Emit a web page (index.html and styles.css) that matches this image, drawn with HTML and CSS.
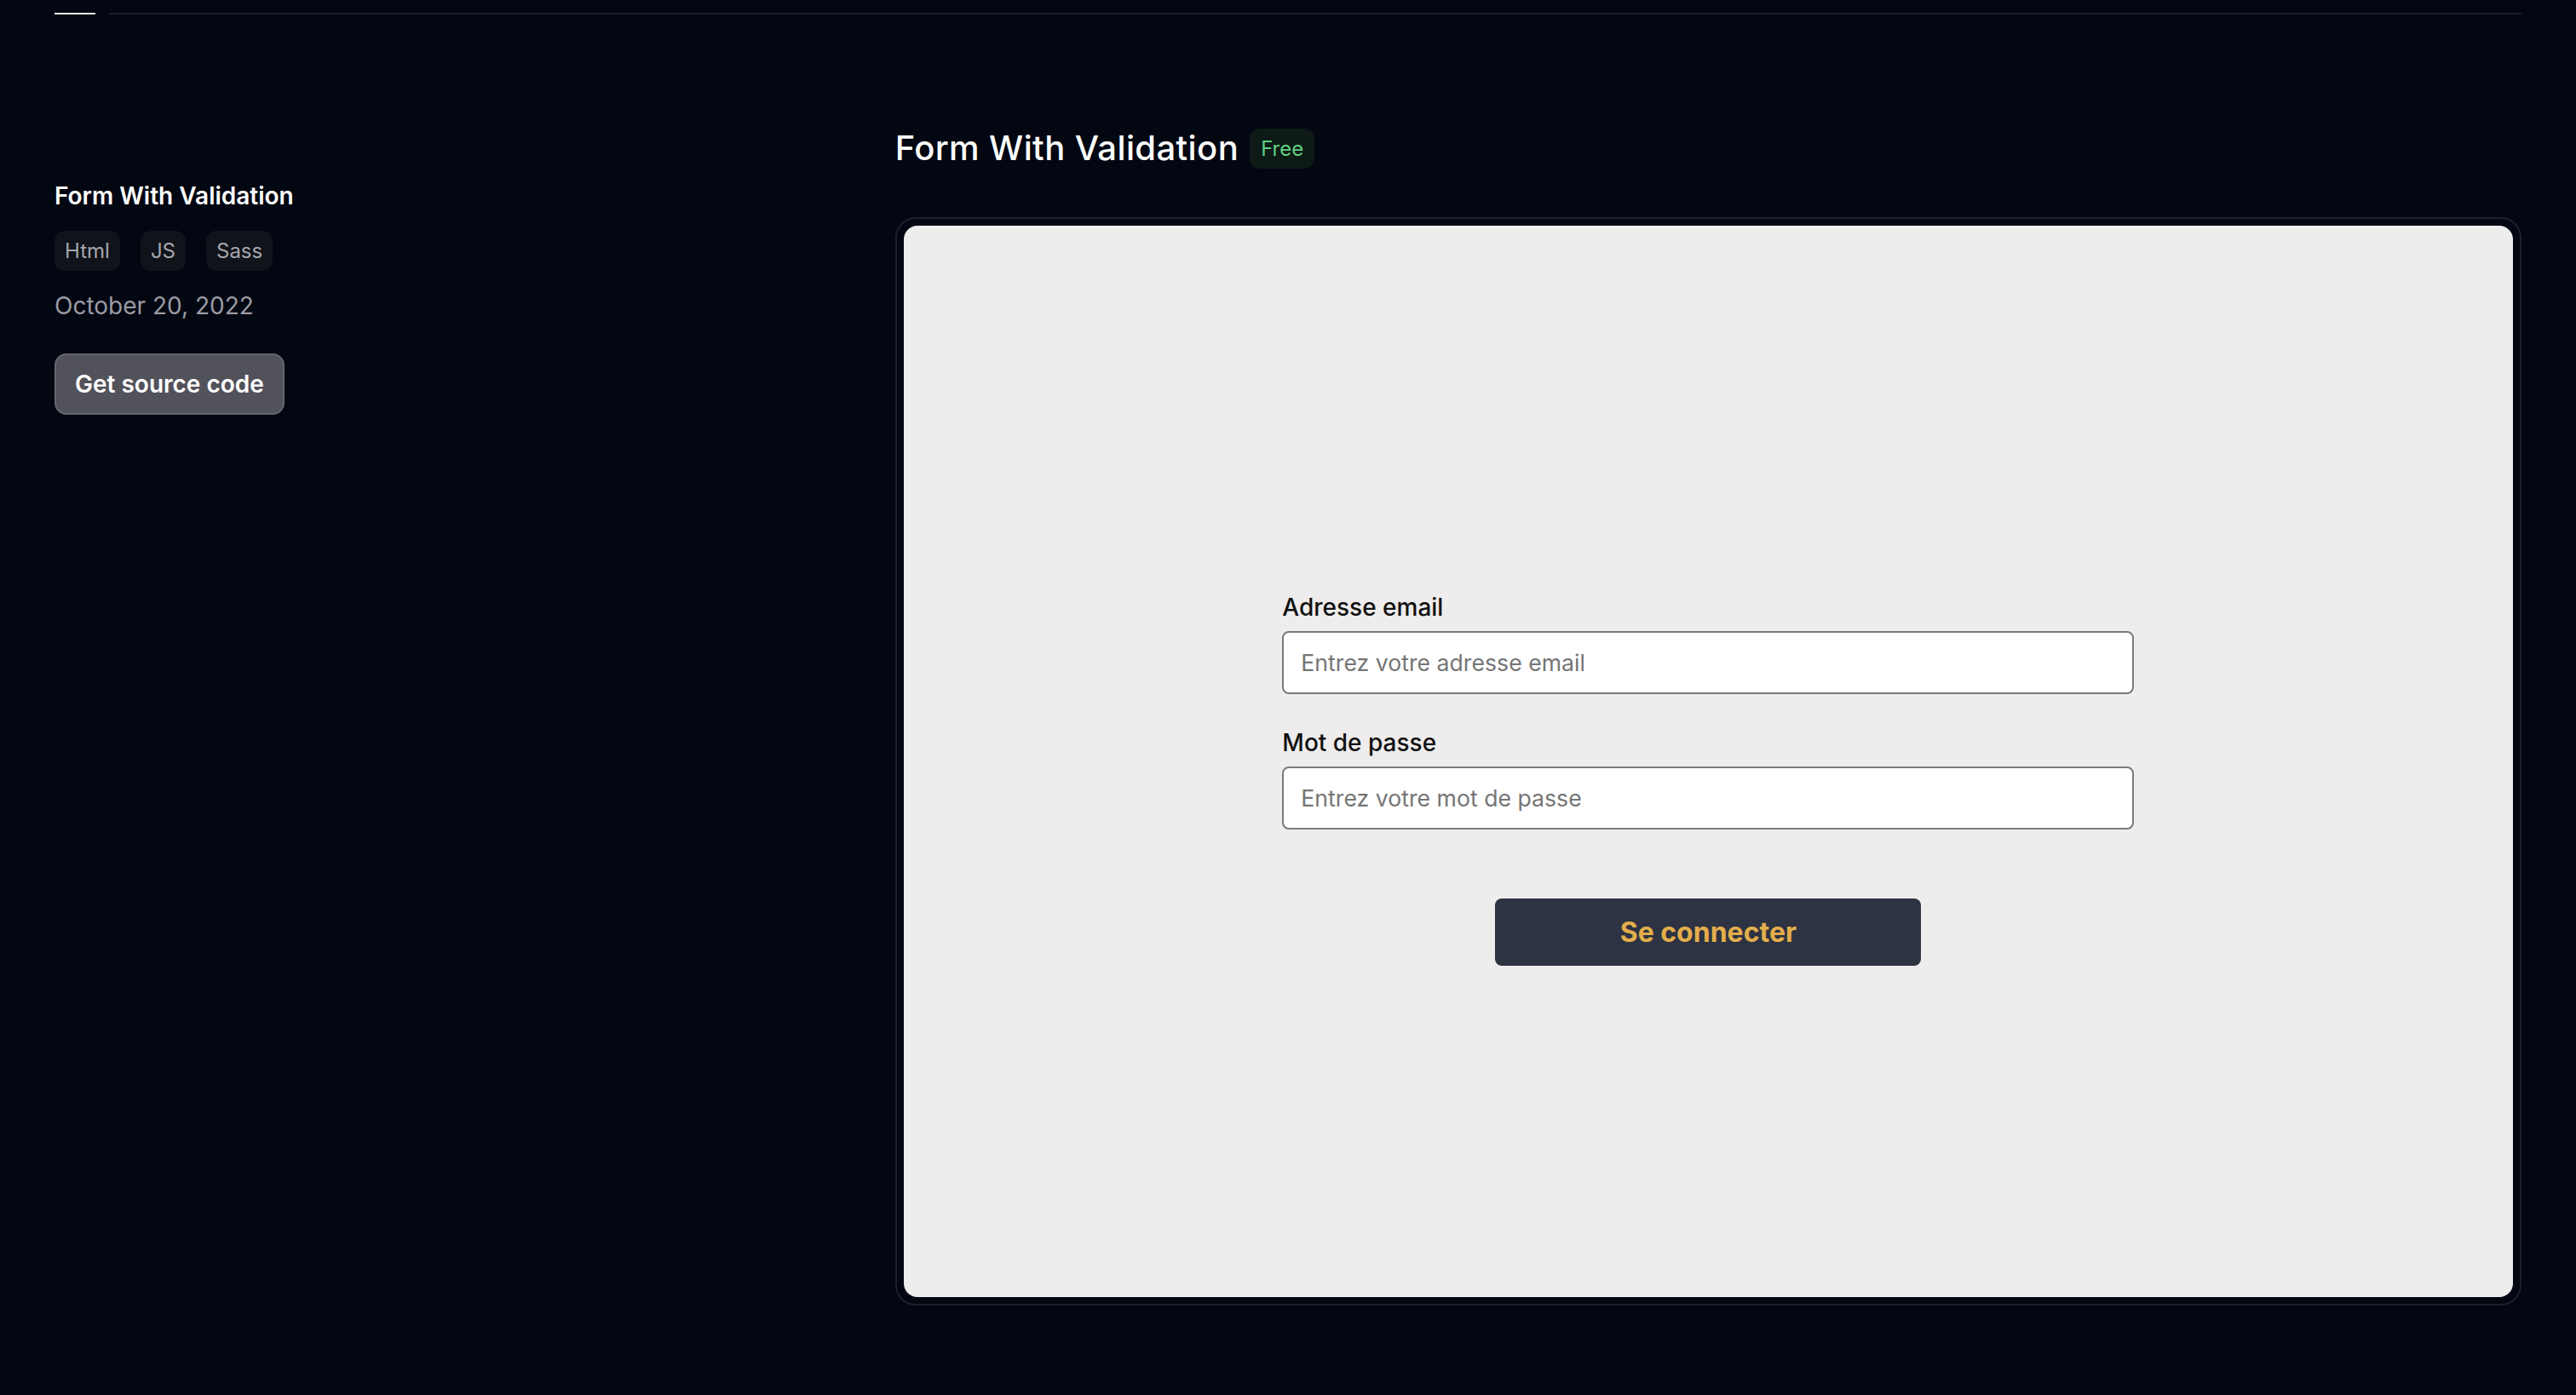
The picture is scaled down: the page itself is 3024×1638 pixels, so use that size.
FILE: index.html
```html
<!DOCTYPE html>
<html lang="en">
<head>
<meta charset="utf-8">
<title>Form With Validation</title>
<link rel="stylesheet" href="styles.css">
</head>
<body>
<div class="progress">
  <span class="progress-done"></span>
  <span class="progress-rest"></span>
</div>
<main class="layout">
  <aside class="meta">
    <h2 class="meta-title">Form With Validation</h2>
    <ul class="tags">
      <li class="tag">Html</li>
      <li class="tag">JS</li>
      <li class="tag">Sass</li>
    </ul>
    <p class="date">October 20, 2022</p>
    <button class="source-btn" type="button">Get source code</button>
  </aside>
  <section class="preview">
    <header class="preview-head">
      <h1 class="preview-title">Form With Validation</h1>
      <span class="badge">Free</span>
    </header>
    <div class="frame">
      <div class="frame-inner">
        <form class="login">
          <div class="field">
            <label class="field-label" for="email">Adresse email</label>
            <input class="field-input" id="email" type="email" placeholder="Entrez votre adresse email">
          </div>
          <div class="field">
            <label class="field-label" for="pwd">Mot de passe</label>
            <input class="field-input" id="pwd" type="password" placeholder="Entrez votre mot de passe">
          </div>
          <button class="submit" type="button">Se connecter</button>
        </form>
      </div>
    </div>
  </section>
</main>
</body>
</html>
```
FILE: styles.css
```css
* { box-sizing: border-box; }
html, body { margin: 0; padding: 0; }
body {
  background: #030712;
  color: #f4f4f5;
  font-family: Inter, "Noto Sans", sans-serif;
  min-height: 1638px;
}
.progress {
  display: flex;
  gap: 16px;
  padding: 15px 64px 0;
}
.progress-done {
  width: 48px;
  height: 2px;
  background: #e4e4e7;
}
.progress-rest {
  flex: 1;
  height: 2px;
  background: #1b1e29;
}
.layout {
  display: grid;
  grid-template-columns: repeat(3, 1fr);
  column-gap: 64px;
  padding: 0 64px;
}
.meta {
  padding-top: 193px;
}
.meta-title {
  margin: 0;
  font-size: 28px;
  line-height: 40px;
  font-weight: 600;
  color: #ffffff;
}
.tags {
  list-style: none;
  display: flex;
  gap: 24px;
  margin: 21px 0 0;
  padding: 0;
}
.tag {
  font-size: 24px;
  line-height: 47px;
  height: 47px;
  padding: 0 12px;
  border-radius: 12px;
  background: #10131a;
  color: #a6a6ae;
}
.date {
  margin: 21px 0 0;
  font-size: 28px;
  line-height: 40px;
  color: #9b9ba4;
}
.source-btn {
  margin-top: 36px;
  height: 72px;
  padding: 0 22px;
  border: 2px solid #66666e;
  border-radius: 14px;
  background: #52525b;
  color: #ffffff;
  font-family: inherit;
  font-size: 28px;
  font-weight: 600;
}
.preview {
  grid-column: span 2;
  padding-top: 129px;
}
.preview-head {
  display: flex;
  align-items: center;
  gap: 13px;
}
.preview-title {
  margin: 0;
  font-size: 40px;
  line-height: 56px;
  font-weight: 500;
  letter-spacing: 0.4px;
  color: #ffffff;
}
.badge {
  height: 47px;
  line-height: 47px;
  padding: 0 13px;
  border-radius: 12px;
  background: #0d1a16;
  color: #5fd082;
  font-size: 24px;
}
.frame {
  margin-top: 53px;
  border: 2px solid #1d1f2a;
  border-radius: 24px;
  padding: 8px;
}
.frame-inner {
  height: 1258px;
  border-radius: 16px;
  background: #eeecec;
  display: flex;
  flex-direction: column;
  align-items: center;
  justify-content: center;
  padding-top: 42px;
}
.login {
  width: 1000px;
  display: flex;
  flex-direction: column;
}
.field {
  display: flex;
  flex-direction: column;
  margin-bottom: 40px;
}
.field-label {
  font-size: 28px;
  line-height: 34px;
  font-weight: 500;
  color: #111111;
  margin-bottom: 11px;
}
.field-input {
  height: 74px;
  border: 2px solid #7a7a7a;
  border-radius: 8px;
  background: #ffffff;
  padding: 0 20px;
  font-family: inherit;
  font-size: 26.667px;
  color: #111111;
}
.field-input::placeholder {
  color: #757575;
}
.submit {
  align-self: center;
  margin-top: 41px;
  width: 500px;
  height: 79px;
  border: none;
  border-radius: 8px;
  background: #2d3342;
  color: #e3ae4b;
  font-family: inherit;
  font-size: 32px;
  font-weight: 700;
}
```
